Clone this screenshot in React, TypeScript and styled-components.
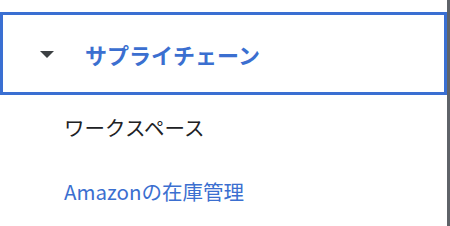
import styled, { createGlobalStyle } from "styled-components";

const GlobalStyle = createGlobalStyle`
  html, body {
    margin: 0;
    padding: 0;
    background: #fff;
    overflow: hidden;
  }
  body {
    font-family: "Noto Sans CJK JP", "Noto Sans", sans-serif;
  }
`;

const Panel = styled.nav`
  width: 450px;
  height: 226px;
  border-right: 3px solid #5f6368;
  padding-top: 12px;
  box-sizing: border-box;
  overflow: hidden;
`;

const Section = styled.div`
  display: flex;
  align-items: center;
  height: 83px;
  border: 3px solid #3a6fd2;
  box-sizing: border-box;
  padding-left: 37px;
`;

const Caret = styled.span`
  width: 0;
  height: 0;
  border-left: 7px solid transparent;
  border-right: 7px solid transparent;
  border-top: 7px solid #3c4043;
  margin-right: 31px;
  margin-top: 1px;
`;

const SectionTitle = styled.span`
  font-size: 22px;
  font-weight: 700;
  color: #3b6fd0;
`;

const List = styled.ul`
  list-style: none;
  margin: 0;
  padding: 0;
`;

const Item = styled.li<{ $active?: boolean }>`
  display: flex;
  align-items: center;
  height: 64px;
  padding-left: 64px;
  font-size: 20.5px;
  color: ${(p) => (p.$active ? "#3b6fd0" : "#202124")};
`;

export default function App() {
  return (
    <>
      <GlobalStyle />
      <Panel>
        <Section>
          <Caret />
          <SectionTitle>サプライチェーン</SectionTitle>
        </Section>
        <List>
          <Item>ワークスペース</Item>
          <Item $active>Amazonの在庫管理</Item>
        </List>
      </Panel>
    </>
  );
}
